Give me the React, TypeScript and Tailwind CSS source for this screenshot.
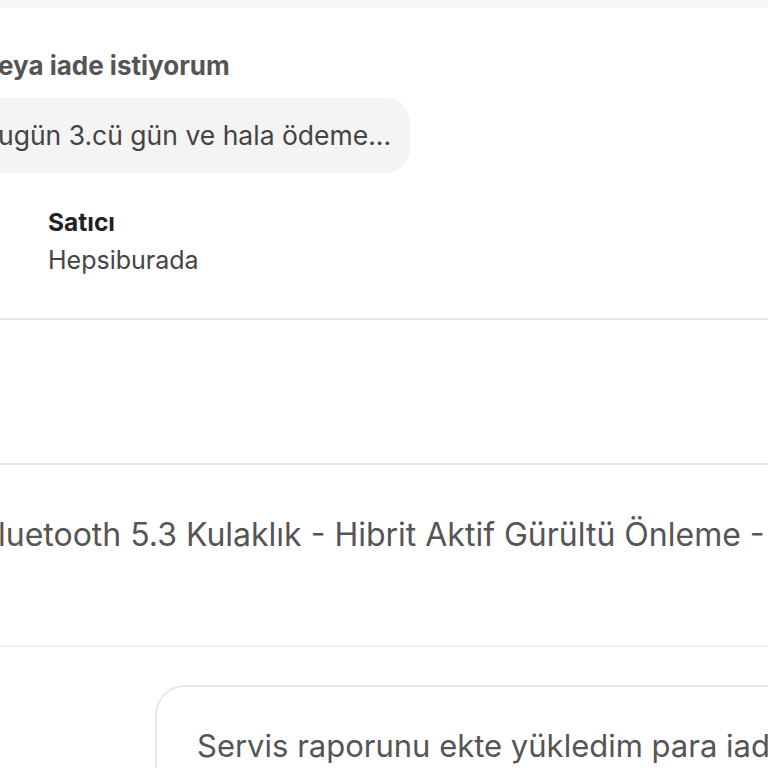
import React from 'react';

const font = { fontFamily: 'Inter, "Noto Sans", sans-serif' };

export default function App() {
  return (
    <div className="w-[768px] h-[768px] overflow-hidden bg-white relative" style={font}>
      {/* top strip */}
      <div className="h-[8px] bg-[#f7f7f7]" />

      {/* message block */}
      <div className="pt-[42px] -ml-[2px]">
        <h2 className="text-[26px] leading-[32px] font-bold text-[#555] whitespace-nowrap">eya iade istiyorum</h2>
        <div className="mt-[16px] -ml-[40px] w-[452px] h-[75px] bg-[#f4f4f4] rounded-[24px] flex items-center pl-[40px]">
          <span className="text-[26.5px] text-[#444] whitespace-nowrap">ugün 3.cü gün ve hala ödeme...</span>
        </div>
      </div>

      {/* seller */}
      <div className="pl-[48px] pt-[30px] pb-[39px]">
        <div className="text-[24.5px] leading-[38px] font-bold text-[#222]">Satıcı</div>
        <div className="text-[25px] leading-[38px] text-[#444]">Hepsiburada</div>
      </div>

      <div className="h-[2px] bg-[#e6e6e6]" />
      <div className="h-[143px]" />
      <div className="h-[2px] bg-[#e6e6e6]" />

      {/* product */}
      <div className="h-[180px] pt-[50px] -ml-[2px]">
        <span className="block text-[32px] leading-[40px] text-[#555] whitespace-nowrap">luetooth 5.3 Kulaklık - Hibrit Aktif Gürültü Önleme - Uzun Pil</span>
      </div>
      <div className="h-[2px] bg-[#f0f0f0]" />

      {/* reply card */}
      <div className="pt-[38px] pl-[155px]">
        <div className="w-[700px] h-[140px] border-2 border-[#e8e8e8] rounded-[30px] pl-[40px] pt-[36px]">
          <span className="text-[31px] text-[#555] whitespace-nowrap">Servis raporunu ekte yükledim para iade edilsin</span>
        </div>
      </div>
    </div>
  );
}
